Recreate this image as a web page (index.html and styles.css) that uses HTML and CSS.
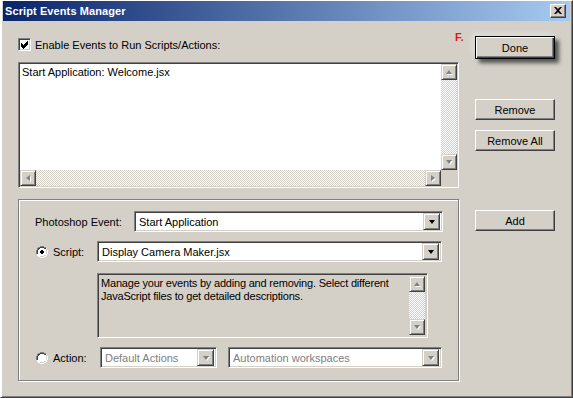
FILE: index.html
```html
<!DOCTYPE html>
<html>
<head>
<meta charset="utf-8">
<link rel="stylesheet" href="styles.css">
</head>
<body>
<div class="window">
  <div class="titlebar">
    <span class="title">Script Events Manager</span>
    <span class="close"><svg width="8" height="7" viewBox="0 0 8 7"><path d="M0 0h2l2 2 2-2h2L5 3.5 8 7H6L4 5 2 7H0l3-3.5z" fill="#000"/></svg></span>
  </div>
  <div class="content">
    <div class="main">
      <div class="check-row">
        <span class="checkbox"><svg width="9" height="9" viewBox="0 0 9 9"><path d="M1 3h1v1h1v1h1V4h1V3h1V2h1V1h1v3H8v1H7v1H6v1H5v1H4v1H3V8H2V7H1z" fill="#000"/></svg></span>
        <span>Enable Events to Run Scripts/Actions:</span>
      </div>
      <div class="listbox">
        <div class="list-text">Start Application: Welcome.jsx</div>
        <div class="vscroll">
          <span class="sbtn"><i class="tri up dis"></i></span>
          <span class="track"></span>
          <span class="sbtn"><i class="tri down dis"></i></span>
        </div>
        <div class="hscroll">
          <span class="sbtn"><i class="tri left dis"></i></span>
          <span class="track"></span>
          <span class="sbtn"><i class="tri right dis"></i></span>
        </div>
        <div class="corner"></div>
      </div>
      <div class="group">
        <div class="row row-event">
          <span class="lbl-event">Photoshop Event:</span>
          <div class="combo w-event"><span class="combo-text">Start Application</span><span class="cbtn"><i class="tri down"></i></span></div>
        </div>
        <div class="row row-script">
          <span class="radio"><svg width="12" height="12" viewBox="0 0 12 12"><path d="M4 0h4v1h2v1h1v2h1v4h-1v2h-1v1H8v1H4v-1H2v-1H1V8H0V4h1V2h1V1h2z" fill="#fff"/><path d="M4 0h4v1h2v1H8V1H4v1H2v2H1v4H0V4h1V2h1V1h2z" fill="#808080"/><path d="M4 1h4v1h2v1H8V2H4v1H3v1H2v4H1V4h1V2h2z" fill="#404040"/><path d="M11 4h1v4h-1v2h-1v1H8v1H4v-1h4v-1h2V8h1z" fill="#fff"/><path d="M10 3h1v5h-1v2H8v1H4v-1h4V9h2z" fill="#d4d0c8"/><path d="M5 4h2v1h1v2H7v1H5V7H4V5h1z" fill="#000"/></svg></span>
          <span class="lbl-radio">Script:</span>
          <div class="combo w-script"><span class="combo-text">Display Camera Maker.jsx</span><span class="cbtn"><i class="tri down"></i></span></div>
        </div>
        <div class="desc">
          <div class="desc-text">Manage your events by adding and removing. Select different JavaScript files to get detailed descriptions.</div>
          <div class="vscroll small">
            <span class="sbtn"><i class="tri up dis"></i></span>
            <span class="track"></span>
            <span class="sbtn"><i class="tri down dis"></i></span>
          </div>
        </div>
        <div class="row row-action">
          <span class="radio"><svg width="12" height="12" viewBox="0 0 12 12"><path d="M4 0h4v1h2v1h1v2h1v4h-1v2h-1v1H8v1H4v-1H2v-1H1V8H0V4h1V2h1V1h2z" fill="#fff"/><path d="M4 0h4v1h2v1H8V1H4v1H2v2H1v4H0V4h1V2h1V1h2z" fill="#808080"/><path d="M4 1h4v1h2v1H8V2H4v1H3v1H2v4H1V4h1V2h2z" fill="#404040"/><path d="M11 4h1v4h-1v2h-1v1H8v1H4v-1h4v-1h2V8h1z" fill="#fff"/><path d="M10 3h1v5h-1v2H8v1H4v-1h4V9h2z" fill="#d4d0c8"/></svg></span>
          <span class="lbl-radio">Action:</span>
          <div class="combo w-set disabled"><span class="combo-text">Default Actions</span><span class="cbtn"><i class="tri down dis"></i></span></div>
          <div class="combo w-action disabled"><span class="combo-text">Automation workspaces</span><span class="cbtn"><i class="tri down dis"></i></span></div>
        </div>
      </div>
    </div>
    <div class="side">
      <span class="flag">F.</span>
      <span class="btn default">Done</span>
      <span class="btn b-remove">Remove</span>
      <span class="btn b-removeall">Remove All</span>
      <span class="btn b-add">Add</span>
    </div>
  </div>
</div>
</body>
</html>
```

FILE: styles.css
```css
* { box-sizing: border-box; }
html, body { margin: 0; padding: 0; }
body {
  width: 573px;
  height: 398px;
  overflow: hidden;
  background: #d4d0c8;
  font-family: "Liberation Sans", Arial, sans-serif;
  font-size: 11px;
  color: #000;
}
.window {
  width: 573px;
  height: 398px;
  background: #d4d0c8;
  border-top: 1px solid #fff;
  border-left: 1px solid #fff;
  border-right: 1px solid #404040;
  border-bottom: 1px solid #404040;
  box-shadow: inset 1px 0 #fff, inset -1px -1px #808080;
  padding: 0 2px 0 2px;
  display: flex;
  flex-direction: column;
}
.titlebar {
  height: 20px;
  background: linear-gradient(to right, #0a246a, #a6caf0);
  display: flex;
  align-items: center;
  padding: 0 3px 0 2px;
}
.title {
  color: #fff;
  font-weight: bold;
  font-size: 11px;
  flex: 1;
  letter-spacing: 0.1px;
}
.close {
  width: 16px;
  height: 14px;
  background: #d4d0c8;
  border-top: 1px solid #fff;
  border-left: 1px solid #fff;
  border-right: 1px solid #404040;
  border-bottom: 1px solid #404040;
  box-shadow: inset -1px -1px #808080;
  display: flex;
  align-items: center;
  justify-content: center;
  padding-bottom: 1px;
  margin-right: 1px;
}
.content {
  flex: 1;
  display: flex;
  padding: 0 0 0 15px;
}
.main {
  width: 441px;
  display: flex;
  flex-direction: column;
}
.check-row {
  display: flex;
  align-items: center;
  height: 13px;
  margin-top: 17px;
  gap: 4px;
}
.checkbox {
  width: 13px;
  height: 13px;
  background: #fff;
  border-top: 1px solid #808080;
  border-left: 1px solid #808080;
  border-right: 1px solid #fff;
  border-bottom: 1px solid #fff;
  box-shadow: inset 1px 1px #404040, inset -1px -1px #d4d0c8;
  display: flex;
  align-items: center;
  justify-content: center;
}
.listbox {
  margin-top: 11px;
  height: 126px;
  background: #fff;
  border-top: 1px solid #808080;
  border-left: 1px solid #808080;
  border-right: 1px solid #fff;
  border-bottom: 1px solid #fff;
  box-shadow: inset 1px 1px #404040, inset -1px -1px #d4d0c8;
  padding: 1px;
  display: grid;
  grid-template-columns: 1fr 16px;
  grid-template-rows: 1fr 16px;
}
.list-text {
  padding: 2px 2px;
  line-height: 13px;
}
.vscroll {
  display: flex;
  flex-direction: column;
}
.hscroll {
  display: flex;
}
.track {
  flex: 1;
  background: repeating-conic-gradient(#fff 0 25%, #d4d0c8 0 50%) 0 0 / 2px 2px;
}
.corner { background: #d4d0c8; }
.sbtn {
  width: 16px;
  height: 16px;
  flex: none;
  background: #d4d0c8;
  border-top: 1px solid #d4d0c8;
  border-left: 1px solid #d4d0c8;
  border-right: 1px solid #404040;
  border-bottom: 1px solid #404040;
  box-shadow: inset 1px 1px #fff, inset -1px -1px #808080;
  display: flex;
  align-items: center;
  justify-content: center;
}
.tri {
  display: block;
  width: 0;
  height: 0;
  border-style: solid;
}
.tri.up { border-width: 0 3.5px 4px 3.5px; border-color: transparent transparent #000 transparent; }
.tri.down { border-width: 4px 3.5px 0 3.5px; border-color: #000 transparent transparent transparent; }
.tri.left { border-width: 3.5px 4px 3.5px 0; border-color: transparent #000 transparent transparent; }
.tri.right { border-width: 3.5px 0 3.5px 4px; border-color: transparent transparent transparent #000; }
.tri.up.dis { border-color: transparent transparent #808080 transparent; filter: drop-shadow(1px 1px 0 #fff); }
.tri.down.dis { border-color: #808080 transparent transparent transparent; filter: drop-shadow(1px 1px 0 #fff); }
.tri.left.dis { border-color: transparent #808080 transparent transparent; filter: drop-shadow(1px 1px 0 #fff); }
.tri.right.dis { border-color: transparent transparent transparent #808080; filter: drop-shadow(1px 1px 0 #fff); }

.group {
  margin-top: 11px;
  height: 182px;
  border: 1px solid #808080;
  box-shadow: inset 1px 1px #fff, 1px 1px #fff;
  padding: 11px 15px 0 16px;
  display: flex;
  flex-direction: column;
}
.row {
  display: flex;
  align-items: center;
  height: 21px;
}
.lbl-event { flex: 1; }
.radio {
  width: 12px;
  height: 12px;
  display: block;
  margin-left: 1px;
  flex: none;
}
.radio svg { display: block; }
.lbl-radio {
  margin-left: 5px;
  width: 44px;
}
.row-script { margin-top: 9px; }
.row-action { margin-top: 9px; }
.combo {
  height: 21px;
  background: #fff;
  border-top: 1px solid #808080;
  border-left: 1px solid #808080;
  border-right: 1px solid #fff;
  border-bottom: 1px solid #fff;
  box-shadow: inset 1px 1px #404040, inset -1px -1px #d4d0c8;
  padding: 2px;
  display: flex;
  align-items: center;
}
.combo-text {
  flex: 1;
  padding-left: 2px;
  white-space: nowrap;
  overflow: hidden;
}
.combo .cbtn {
  width: 17px;
  height: 17px;
  background: #d4d0c8;
  border-top: 1px solid #d4d0c8;
  border-left: 1px solid #d4d0c8;
  border-right: 1px solid #404040;
  border-bottom: 1px solid #404040;
  box-shadow: inset 1px 1px #fff, inset -1px -1px #808080;
  display: flex;
  align-items: center;
  justify-content: center;
}
.w-event { width: 309px; }
.w-script { width: 345px; }
.w-set { width: 117px; margin-left: 3px; }
.w-action { width: 214px; margin-left: 11px; }
.disabled .combo-text { color: #808080; }

.desc {
  margin: 11px 0 0 62px;
  width: 331px;
  height: 65px;
  border-top: 1px solid #808080;
  border-left: 1px solid #808080;
  border-right: 1px solid #fff;
  border-bottom: 1px solid #fff;
  box-shadow: inset 1px 1px #404040, inset -1px -1px #d4d0c8;
  padding: 2px;
  display: flex;
}
.desc-text {
  flex: 1;
  padding: 1px 0 0 1px;
  line-height: 13px;
  letter-spacing: -0.2px;
}
.vscroll.small { width: 16px; }

.side {
  position: relative;
  margin-left: 16px;
  width: 80px;
  display: flex;
  flex-direction: column;
}
.flag {
  position: absolute;
  left: -20px;
  top: 10px;
  color: #e8141e;
  font-weight: bold;
  font-size: 11px;
}
.btn {
  width: 80px;
  height: 21px;
  background: #d4d0c8;
  border-top: 1px solid #fff;
  border-left: 1px solid #fff;
  border-right: 1px solid #404040;
  border-bottom: 1px solid #404040;
  box-shadow: inset -1px -1px #808080;
  display: flex;
  align-items: center;
  justify-content: center;
}
.btn.default {
  height: 23px;
  margin-top: 15px;
  border: 1px solid #000;
  box-shadow: inset 1px 1px #fff, inset -1px -1px #404040, inset -2px -2px #808080, 4px 4px 4px rgba(0,0,0,0.6), -3px -3px 6px rgba(255,255,255,0.3);
}
.b-remove { margin-top: 40px; }
.b-removeall { margin-top: 10px; }
.b-add { margin-top: 59px; }
```
